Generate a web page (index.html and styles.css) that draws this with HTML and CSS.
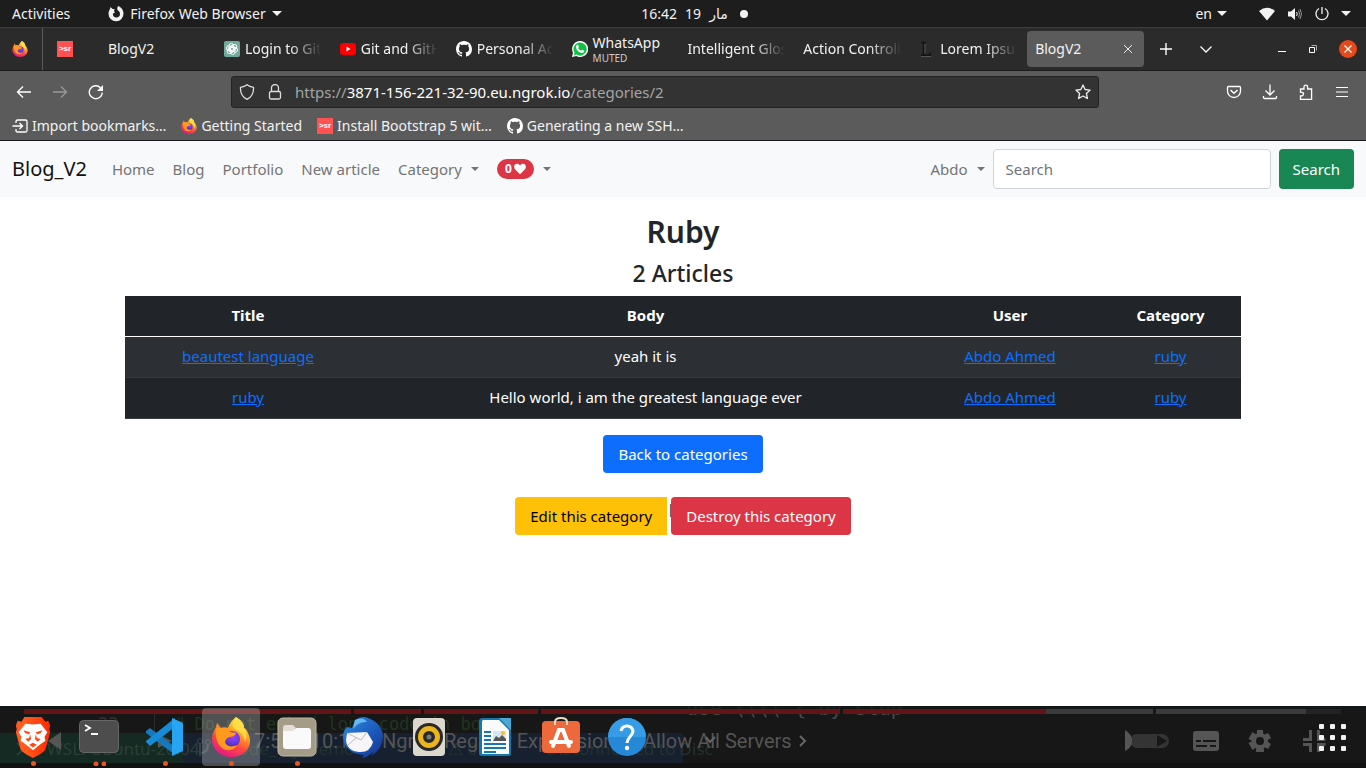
FILE: index.html
```html
<!DOCTYPE html>
<html lang="en">
<head>
<meta charset="utf-8">
<title>BlogV2</title>
<link rel="stylesheet" href="styles.css">
</head>
<body>
<svg class="defs" aria-hidden="true">
  <defs>
    <linearGradient id="flame" x1="0.8" y1="0" x2="0.3" y2="1"><stop offset="0" stop-color="#fff44f"/><stop offset=".35" stop-color="#ffa726"/><stop offset=".65" stop-color="#ff4a3f"/><stop offset="1" stop-color="#e31587"/></linearGradient>
    <radialGradient id="globe" cx=".55" cy=".3" r=".7"><stop offset="0" stop-color="#a43cff"/><stop offset=".6" stop-color="#6a3be0"/><stop offset="1" stop-color="#4a2bb5"/></radialGradient>
    <linearGradient id="brave" x2="1"><stop offset=".3" stop-color="#ff5a1f"/><stop offset="1" stop-color="#ff2a00"/></linearGradient>
    <linearGradient id="bird" x2="1" y2="1"><stop offset="0" stop-color="#2d8de0"/><stop offset=".6" stop-color="#1b56b8"/><stop offset="1" stop-color="#182f8c"/></linearGradient>
    <symbol id="firefox" viewBox="0 0 40 40">
      <path fill="url(#flame)" d="M25 0c6 4 8 7 8 11 3 1 5 7 6 11 1 11-8 18-19 18S1 32 1 22C1 17 3 13 5 10l1-4 4 5c2-1 5-1 7 0 1-4 4-8 8-11z"/>
      <circle cx="21" cy="22" r="8" fill="url(#globe)"/>
      <path fill="#ff9a1f" d="M5 11l5 0c4-1 8 1 9 4l6 1c-1 3-4 4-7 4-3 2-5 4-3 7 2 3 7 3 11 1-3 6-11 7-16 2C5 25 4 17 5 11z"/>
      <path fill="#ffe14a" opacity=".85" d="M25 0c6 4 8 7 8 11 3 4 3 9 1 14-1-7-4-10-9-12-5-3-4-8 0-13z"/>
    </symbol>
    <symbol id="github" viewBox="0 0 16 16"><path fill="#fff" d="M8 0C3.58 0 0 3.58 0 8c0 3.54 2.29 6.53 5.47 7.59.4.07.55-.17.55-.38 0-.19-.01-.82-.01-1.49-2.01.37-2.53-.49-2.69-.94-.09-.23-.48-.94-.82-1.13-.28-.15-.68-.52-.01-.53.63-.01 1.08.58 1.23.82.72 1.21 1.87.87 2.33.66.07-.52.28-.87.51-1.07-1.78-.2-3.64-.89-3.64-3.95 0-.87.31-1.59.82-2.15-.08-.2-.36-1.02.08-2.12 0 0 .67-.21 2.2.82.64-.18 1.32-.27 2-.27s1.36.09 2 .27c1.53-1.04 2.2-.82 2.2-.82.44 1.1.16 1.92.08 2.12.51.56.82 1.27.82 2.15 0 3.07-1.87 3.75-3.65 3.95.29.25.54.73.54 1.48 0 1.07-.01 1.93-.01 2.2 0 .21.15.46.55.38A8.01 8.01 0 0016 8c0-4.42-3.58-8-8-8z"/></symbol>
  </defs>
</svg>

<header class="topbar">
  <div class="topbar-left">
    <span>Activities</span>
    <span class="app-menu">
      <svg width="16" height="16" viewBox="0 0 16 16"><path fill="#f2f2f2" d="M10 0c3 1 5.500 4 5.500 7.500A7.500 7.500 0 11.500 8C.5 5.500 1.500 4 2 3l.5-2 2 2 2 0-.5 2 1 1.500-2 1c-.5 3 2 4 3.500 4 2 0 3.500-1.500 3.500-3.500 0-2-1-3-2-3.500C9 4 9 2 10 0z"/></svg>
      Firefox Web Browser <i class="arrow"></i>
    </span>
  </div>
  <div class="clock"><span>16:42</span><span>19</span><span lang="ar">مار</span><i class="notice"></i></div>
  <div class="topbar-right">
    <span class="lang">en <i class="arrow"></i></span>
    <svg width="16" height="14" viewBox="0 0 16 14"><path fill="#f2f2f2" d="M0 4Q8-2.500 16 4L8 13.500z"/></svg>
    <svg width="16" height="14" viewBox="0 0 16 14"><path fill="#f2f2f2" d="M1 4.500h3L8 1v12L4 9.500H1z"/><path fill="none" stroke="#f2f2f2" d="M9.500 5q1.500 2 0 4"/><path fill="none" stroke="#999" d="M11.500 3.500q2 3.500 0 7M13 2q3 5 0 10"/></svg>
    <svg width="14" height="14" viewBox="0 0 14 14"><path fill="none" stroke="#f2f2f2" stroke-width="1.300" d="M7 0v7M4 1.500a6 6 0 106 0"/></svg>
    <i class="arrow"></i>
  </div>
</header>

<nav class="tabstrip" aria-label="Browser tabs">
  <div class="pinned first"><svg width="16" height="16"><use href="#firefox"/></svg></div>
  <div class="pinned"><span class="sr">&gt;sr</span></div>
  <div class="tabs">
    <a class="tab" href="#">BlogV2</a>
    <a class="tab" href="#"><svg width="16" height="16" viewBox="0 0 16 16"><rect width="16" height="16" rx="2" fill="#74aa9c"/><g fill="none" stroke="#fff" stroke-width=".9"><rect x="5" y="2.500" width="4.500" height="8" rx="2.200"/><rect x="5" y="2.500" width="4.500" height="8" rx="2.200" transform="rotate(60 8 8)"/><rect x="5" y="2.500" width="4.500" height="8" rx="2.200" transform="rotate(120 8 8)"/><rect x="5" y="2.500" width="4.500" height="8" rx="2.200" transform="rotate(180 8 8)"/><rect x="5" y="2.500" width="4.500" height="8" rx="2.200" transform="rotate(240 8 8)"/><rect x="5" y="2.500" width="4.500" height="8" rx="2.200" transform="rotate(300 8 8)"/></g></svg><span class="label">Login to GitHub</span></a>
    <a class="tab" href="#"><svg width="16" height="16" viewBox="0 0 16 16"><rect y="2" width="16" height="12" rx="3" fill="#f00"/><path fill="#fff" d="M6.500 5.500v5l4-2.500z"/></svg><span class="label">Git and GitHub</span></a>
    <a class="tab" href="#"><svg width="16" height="16"><use href="#github"/></svg><span class="label">Personal Access</span></a>
    <a class="tab" href="#"><svg width="16" height="16" viewBox="0 0 16 16"><path fill="#fff" d="M8 0a8 8 0 11-3.700 15L0 16l1-4.300A8 8 0 018 0z"/><path fill="#0fc143" d="M8 1.400a6.600 6.600 0 11-3.400 12.200l-2.700.6.700-2.600A6.600 6.600 0 018 1.400z"/><path fill="#fff" d="M5 3.800l1 0 1 2-.8 1.200q1 2 3 2.800l1-1 2 1c0 2-2 2.500-3 2.200C6.500 11.200 4 8.500 4 6q0-1.500 1-2.200z"/></svg><span class="stack"><span>WhatsApp</span><small>MUTED</small></span></a>
    <a class="tab" href="#"><span class="label">Intelligent Glossary</span></a>
    <a class="tab" href="#"><span class="label">Action Controller</span></a>
    <a class="tab" href="#"><svg width="16" height="16" viewBox="0 0 16 16"><path fill="none" stroke="#111" stroke-width="1.500" d="M2 1.500h5M4.500 1.500v13M2 14.500h9v-3"/><path stroke="#555" d="M2 15.500h10M6 3v9"/></svg><span class="label">Lorem Ipsum</span></a>
    <a class="tab active" href="#">BlogV2<svg width="10" height="10" viewBox="0 0 10 10"><path stroke="#eee" d="M1 1l8 8M9 1L1 9"/></svg></a>
  </div>
  <div class="tab-tools">
    <svg width="14" height="14" viewBox="0 0 14 14"><path stroke="#fff" stroke-width="1.400" d="M7 1v12M1 7h12"/></svg>
    <svg width="14" height="14" viewBox="0 0 14 14"><path fill="none" stroke="#fff" stroke-width="1.300" d="M1.500 4.500L7 10l5.500-5.500"/></svg>
  </div>
  <div class="window-tools">
    <svg width="10" height="10" viewBox="0 0 10 10"><path stroke="#fff" d="M1 7.500h8"/></svg>
    <svg width="10" height="10" viewBox="0 0 10 10"><path fill="none" stroke="#fff" d="M1.500 3.500h5v5h-5z"/><path fill="none" stroke="#aaa" d="M3.500 1.500h5v5"/></svg>
    <span class="close"><svg width="8" height="8" viewBox="0 0 8 8"><path stroke="#fff" stroke-width="1.300" d="M.5.5l7 7M7.500.5l-7 7"/></svg></span>
  </div>
</nav>

<div class="toolbar">
  <div class="nav-tools">
    <svg width="16" height="16" viewBox="0 0 16 16"><path fill="none" stroke="#fff" stroke-width="1.300" d="M15 8H1.500M7 2.500L1.500 8 7 13.500"/></svg>
    <svg width="16" height="16" viewBox="0 0 16 16"><path fill="none" stroke="#999" stroke-width="1.300" d="M1 8h13.500M9 2.500L14.500 8 9 13.500"/></svg>
    <svg width="16" height="16" viewBox="0 0 16 16"><path fill="none" stroke="#fff" stroke-width="1.400" d="M14.300 8.500A6.500 6.500 0 1112.500 3.700"/><path fill="#fff" d="M15 1v6H9z"/></svg>
  </div>
  <div class="urlbar">
    <svg width="16" height="16" viewBox="0 0 16 16"><path fill="none" stroke="#ddd" stroke-width="1.300" d="M8 .8C6 2.500 4 3 1.500 3.300c-.3 5 1.500 9.500 6.500 12 5-2.500 6.800-7 6.500-12C12 3 10 2.500 8 .8z"/></svg>
    <svg width="16" height="16" viewBox="0 0 16 16"><rect x="2.500" y="7.500" width="11" height="7.500" rx="1.500" fill="none" stroke="#ddd" stroke-width="1.300"/><path fill="none" stroke="#ddd" stroke-width="1.300" d="M4.500 7V4a3.500 3.500 0 017 0v3"/></svg>
    <span class="url">https://<b>3871-156-221-32-90.eu.ngrok.io</b>/categories/2</span>
    <svg width="16" height="16" viewBox="0 0 16 16"><path fill="none" stroke="#eee" stroke-width="1.300" stroke-linejoin="round" d="M8 1l2.100 4.500 5 .6-3.700 3.400 1 5L8 12l-4.400 2.500 1-5L.9 6.100l5-.6z"/></svg>
  </div>
  <div class="page-tools">
    <svg width="16" height="16" viewBox="0 0 16 16"><path fill="none" stroke="#fff" stroke-width="1.300" d="M2.500 2.500h11q1 0 1 1V7a6.500 6.500 0 01-13 0V3.500q0-1 1-1z"/><path fill="none" stroke="#fff" stroke-width="1.500" d="M4.500 6L8 9.300 11.500 6"/></svg>
    <svg width="16" height="16" viewBox="0 0 16 16"><path fill="none" stroke="#fff" stroke-width="1.300" d="M8 .5V11M3.500 6.500L8 11l4.500-4.500M1.500 12v1.500q0 1 1 1h11q1 0 1-1V12"/></svg>
    <svg width="16" height="16" viewBox="0 0 16 16"><path fill="none" stroke="#fff" stroke-width="1.300" d="M2.500 15.300v-3.500c4 .8 4-4.300 0-3.500V5h3.500V3a1.800 1.800 0 013.600 0v2h4v10.300z"/></svg>
    <svg width="16" height="16" viewBox="0 0 16 16"><path stroke="#fff" stroke-width="1.200" d="M2 3.500h12M2 8h12M2 12.500h12"/></svg>
  </div>
</div>

<nav class="bookmarks" aria-label="Bookmarks">
  <a href="#"><svg width="16" height="16" viewBox="0 0 16 16"><path fill="none" stroke="#fff" stroke-width="1.300" d="M4 5V3.500q0-1.500 1.500-1.500h8Q15 2 15 3.500v9q0 1.500-1.500 1.500h-8Q4 14 4 12.500V11M.5 8H10M7.500 5l3 3-3 3"/></svg>Import bookmarks…</a>
  <a href="#"><svg width="16" height="16"><use href="#firefox"/></svg>Getting Started</a>
  <a href="#"><span class="sr">&gt;sr</span>Install Bootstrap 5 wit…</a>
  <a href="#"><svg width="16" height="16"><use href="#github"/></svg>Generating a new SSH…</a>
</nav>

<div class="page">
  <nav class="navbar" aria-label="Site">
    <a class="brand" href="#">Blog_V2</a>
    <a href="#">Home</a>
    <a href="#">Blog</a>
    <a href="#">Portfolio</a>
    <a href="#">New article</a>
    <a class="toggle" href="#">Category</a>
    <a class="toggle" href="#"><span class="badge">0<svg width="12" height="12" viewBox="0 0 12 12"><path fill="#fff" d="M6 11.300L1 6.200C-1 3.500.8.800 3 .8c1.300 0 2.300.6 3 1.700C6.700 1.400 7.700.8 9 .8c2.200 0 4 2.700 2 5.400z"/></svg></span></a>
    <a class="toggle user" href="#">Abdo</a>
    <form class="search">
      <input type="search" placeholder="Search" aria-label="Search">
      <button type="button" class="btn success">Search</button>
    </form>
  </nav>
  <main class="container">
    <h1>Ruby</h1>
    <h2>2 Articles</h2>
    <table>
      <colgroup><col class="c-title"><col class="c-body"><col class="c-user"><col class="c-cat"></colgroup>
      <thead><tr><th>Title</th><th>Body</th><th>User</th><th>Category</th></tr></thead>
      <tbody>
        <tr><td><a href="#">beautest language</a></td><td>yeah it is</td><td><a href="#">Abdo Ahmed</a></td><td><a href="#">ruby</a></td></tr>
        <tr><td><a href="#">ruby</a></td><td>Hello world, i am the greatest language ever</td><td><a href="#">Abdo Ahmed</a></td><td><a href="#">ruby</a></td></tr>
      </tbody>
    </table>
    <a class="btn primary" href="#">Back to categories</a>
    <div class="actions"><a class="btn warning" href="#">Edit this category</a><span class="bar">|</span><button type="button" class="btn danger">Destroy this category</button></div>
  </main>
</div>

<footer class="dock">
  <svg class="backdrop" viewBox="0 0 1366 62" preserveAspectRatio="none" aria-hidden="true">
    <rect width="1366" height="62" fill="#171717"/>
    <rect y="27" width="183" height="30" fill="#142a22"/>
    <rect x="183" y="27" width="500" height="30" fill="#17202f"/>
    <rect y="57" width="1366" height="5" fill="#111"/>
    <path stroke="#2c2c2c" d="M154.500 3v24"/>
    <g font-family="'DejaVu Sans Mono', monospace" font-size="17" fill="#1f3520"><text x="174" y="24"># Do not embed long code in bo</text><text x="98" y="24" fill="#333">22</text></g>
    <g font-family="'DejaVu Sans Mono', monospace" font-size="20" fill="#4a4a4a"><text x="686" y="9">use (((( { by stup</text></g>
    <g font-family="'Noto Sans', sans-serif" font-size="17" fill="#2b4038"><path fill="none" stroke="#2b4038" stroke-width="2" d="M17 37l7 6-7 6"/><text x="47" y="49">WSL: Ubuntu-20.04</text></g>
    <path fill="none" stroke="#34434a" stroke-width="2" d="M200 37v13M200 47q8 0 8-8"/><circle cx="200" cy="35" r="2.500" fill="none" stroke="#34434a"/><circle cx="208" cy="36" r="2.500" fill="none" stroke="#34434a"/>
    <g font-family="'Noto Sans', sans-serif" font-size="17" fill="#21332f"><text x="230" y="49">code_my_demo</text><text x="448" y="49">⚠ 0</text><text x="546" y="49">Disconnected to Disc</text></g>
    <rect width="1366" height="3" fill="#141818" opacity=".8"/>
    <path fill="#631414" d="M24 3h327v5H24zM354 3h67v5h-67zM424 3h114v5H424zM541 3h299v5H541zM843 3h203v5H843z"/>
    <path fill="#3b3b3b" d="M1046 3h107v5h-107zM1156 3h150v5h-150z"/><path fill="#232323" d="M1306 3h35v5h-35z"/>
    <path fill="#555" d="M61 26v18l-13-9zM158 28v14l14-7z"/>
    <g font-family="Roboto, sans-serif" font-size="20" fill="#555"><text x="254" y="42">7:53 / 10:17</text><text x="382" y="42">Ngrok</text><text x="444" y="42">Regular Expression</text><text x="643" y="42">Allow All Servers</text></g>
    <path fill="none" stroke="#666" stroke-width="2" d="M800 30l5 5-5 5M706 31l4 5 5-5"/>
    <rect x="1130" y="28" width="39" height="14" rx="7" fill="#343434"/><path fill="#555" d="M1125 24q7 4 7 11t-7 10z"/><path fill="#171717" d="M1157 29v12l10-6z"/>
    <rect x="1193" y="25" width="26" height="20" rx="3" fill="#555"/><path stroke="#171717" stroke-width="2" d="M1196 35h5M1203 35h13M1196 40h11M1210 40h6"/>
    <g transform="translate(1260 35)"><g fill="#555"><circle r="8"/><path d="M-3-11h6l1 22h-8z"/><path d="M-3-11h6l1 22h-8z" transform="rotate(60)"/><path d="M-3-11h6l1 22h-8z" transform="rotate(120)"/></g><circle r="4" fill="#171717"/></g>
    <path fill="none" stroke="#555" stroke-width="3" d="M1303 33.500h7.500V24M1303 38.500h7.500V46M1318.500 24v9.500h7M1318.500 46v-7.500h7"/>
  </svg>
  <div class="apps">
    <button class="app" aria-label="Brave"><svg width="40" height="44" viewBox="0 0 40 44"><path fill="url(#brave)" d="M11 1h18l4 5 3-1 2 5-1 4 1 3-5 18q-1 3-13 9Q8 38 7 35L2 17l1-3-1-4 2-5 4 1z"/><path fill="#fff" d="M12 8l8 1 8-1 7 9-3 5 1 4-6 4-7 6-7-6-6-4 1-4-3-5z"/><path fill="#ff4a10" d="M10 15l7 2-1 2-4-1zM30 15l-7 2 1 2 4-1zM17 19l1 5-3 3-3-3 4-1zM23 19l-1 5 3 3 3-3-4-1zM16 30l4-2 4 2-4 3z"/></svg><i></i></button>
    <button class="app two" aria-label="Terminal"><svg width="40" height="40" viewBox="0 0 40 40"><rect x=".5" y="3.500" width="39" height="32" rx="4" fill="#4d4d4d" stroke="#666"/><path fill="none" stroke="#fff" stroke-width="1.800" d="M6 8l5 3-5 3M12 17h7"/></svg><i></i></button>
    <button class="app" aria-label="Visual Studio Code"><svg width="40" height="40" viewBox="0 0 40 40"><path fill="#1679bd" d="M1 14l4-3 25 19v8L1 16z"/><path fill="#168cd8" d="M1 25l4 4 25-19V1L1 24z"/><path fill="#27a5f2" d="M27 1l11 5v28l-11 5z"/></svg><i></i></button>
    <button class="app current" aria-label="Firefox"><svg width="40" height="40"><use href="#firefox"/></svg><i></i></button>
    <button class="app" aria-label="Files"><svg width="40" height="40" viewBox="0 0 40 40"><rect x="1" y="1" width="38" height="38" rx="5" fill="#a49c87" stroke="#c0b9a8"/><path fill="#e4dfd6" d="M6 11q0-3 3-3h7l3 3h-1v6H6z"/><path fill="#fafafa" d="M6 14h10l3-3h12q3 0 3 3v15q0 3-3 3H9q-3 0-3-3z"/></svg><i></i></button>
    <button class="app off" aria-label="Thunderbird"><svg width="42" height="42" viewBox="0 0 42 42"><path fill="url(#bird)" d="M13 4q7-5 13-2 14 5 15 18 0 13-12 20l3-5q-6 6-12 7l2-3Q6 38 2 26-1 17 5 11l5 1z"/><path fill="#64b9f2" d="M13 4q8-4 12 2-8-1-14 7z"/><path fill="#f7f5f8" d="M5 17l20-1 6 10q-3 11-14 10Q5 35 4 24z"/><path fill="none" stroke="#bbb" d="M5 17l14 7 6-8M6 29l8-7"/></svg><i></i></button>
    <button class="app off" aria-label="Rhythmbox"><svg width="40" height="40" viewBox="0 0 40 40"><rect x="4" y="1" width="32" height="38" rx="4" fill="#ddd8ce"/><circle cx="20" cy="20" r="14" fill="#292929"/><circle cx="20" cy="20" r="8.500" fill="none" stroke="#edb51c" stroke-width="5"/><circle cx="20" cy="20" r="2.500" fill="#777"/></svg><i></i></button>
    <button class="app off" aria-label="Writer"><svg width="40" height="40" viewBox="0 0 40 40"><path fill="#1577ad" d="M8 1h28v36q0 2-2 2H7q-3 0-3-3V4q0-3 4-3z"/><path fill="#fafafa" d="M8 3h16l10 10v24H7V4z"/><path fill="#4ba8d5" d="M24 1h12v12z"/><path stroke="#1577ad" stroke-width="2" d="M9 15h7M9 19h7M9 23h7M9 27h22M9 31h22M9 35h12"/><path fill="#d7e7ef" d="M18 14h13v10H18z"/><path fill="#555" d="M18 24l3-5 3 2 3-3 4 4v2z"/><circle cx="28" cy="16" r="2" fill="#fb3"/></svg><i></i></button>
    <button class="app off" aria-label="Software"><svg width="40" height="40" viewBox="0 0 40 40"><rect x="1" y="4" width="38" height="32" rx="4" fill="#ed683b"/><path fill="none" stroke="#eadcc3" stroke-width="2" d="M14 8V5q0-4 6-4t6 4v3"/><path fill="none" stroke="#fff" stroke-width="4" stroke-linecap="round" d="M12 29l6-16h4l6 16M10 25h20"/></svg><i></i></button>
    <button class="app off" aria-label="Help"><svg width="40" height="40" viewBox="0 0 40 40"><circle cx="20" cy="20" r="19" fill="#2589d8"/><path fill="#359ce5" d="M1 20a19 19 0 0138 0z"/><path fill="none" stroke="#fff" stroke-width="3" d="M14 14q1-5 6-5t6 5c0 5-6 6-6 12"/><circle cx="20" cy="31" r="2.200" fill="#fff"/></svg><i></i></button>
  </div>
  <button class="grid" aria-label="Show applications"><i></i><i></i><i></i><i></i><i></i><i></i><i></i><i></i><i></i></button>
</footer>
</body>
</html>
```
FILE: styles.css
```css
* { box-sizing: border-box; }
body {
  margin: 0;
  min-height: 100vh;
  display: flex;
  flex-direction: column;
  font: 14px/20px "Noto Sans", "DejaVu Sans", sans-serif;
  color: #f2f2f2;
  background: #fff;
}
a { color: inherit; text-decoration: none; }
svg { flex: none; display: block; }
button { font: inherit; border: 0; padding: 0; background: none; cursor: pointer; }
.defs { position: absolute; width: 0; height: 0; }

/* Desktop panel */
.topbar {
  display: grid;
  grid-template-columns: 1fr auto 1fr;
  align-items: center;
  height: 27px;
  padding: 0 15px 0 12px;
  background: #1d1d1d;
}
.topbar-left, .topbar-right, .app-menu, .clock, .lang { display: flex; align-items: center; }
.topbar-left { gap: 38px; }
.app-menu { gap: 6px; }
.arrow {
  border: 5px solid transparent;
  border-top-color: #f2f2f2;
  border-bottom: 0;
}
.clock { gap: 8px; padding-left: 26px; }
.notice { width: 8px; height: 8px; margin-left: 4px; border-radius: 50%; background: #f2f2f2; }
.topbar-right { justify-content: flex-end; gap: 12px; }
.lang { gap: 5px; margin-right: 20px; }

/* Browser tabs */
.tabstrip {
  display: flex;
  align-items: stretch;
  height: 44px;
  background: #2b2b2b;
  border-top: 1px solid #3d3d3d;
  border-bottom: 1px solid #1c1c1c;
}
.pinned { display: flex; align-items: center; padding: 0 26px 0 14px; }
.pinned.first { padding: 0 14px 0 12px; border-right: 1px solid #5b5b5b; }
.sr {
  width: 16px;
  height: 16px;
  flex: none;
  background: #ff5252;
  font: bold 8px/15px "Liberation Sans", sans-serif;
  text-align: center;
  color: #fff;
}
.tabs { display: flex; flex: 1; min-width: 0; }
.tab {
  display: flex;
  flex: 1 1 0;
  align-items: center;
  gap: 5px;
  min-width: 0;
  margin: 3px 1px;
  padding: 0 8px;
  border-radius: 4px;
}
.label {
  flex: 1;
  min-width: 0;
  overflow: hidden;
  white-space: nowrap;
  mask-image: linear-gradient(to left, transparent, #000 32px);
}
.stack { display: flex; flex-direction: column; line-height: 17px; }
.stack small { font-size: 10px; line-height: 14px; color: #ccc; }
.tab.active { justify-content: space-between; padding-right: 11px; background: #5b5b5b; }
.tab-tools { display: flex; align-items: center; gap: 26px; padding: 0 64px 0 14px; }
.window-tools { display: flex; align-items: center; gap: 21px; padding-right: 9px; }
.close {
  display: grid;
  place-items: center;
  width: 18px;
  height: 18px;
  border-radius: 50%;
  background: #e5491c;
}

/* Address row */
.toolbar {
  display: flex;
  align-items: center;
  height: 41px;
  padding: 0 16px;
  background: #5b5b5b;
}
.nav-tools, .page-tools { display: flex; gap: 20px; }
.nav-tools { flex: none; width: 215px; }
.page-tools { margin-left: 127px; }
.urlbar {
  display: flex;
  flex: 1;
  align-items: center;
  gap: 12px;
  height: 32px;
  padding: 0 7px;
  border: 1px solid #222;
  border-radius: 3px;
  background: #333;
}
.url { flex: 1; font-size: 15px; color: #a5a5a5; }
.url b { font-weight: 400; color: #fff; }
.bookmarks {
  display: flex;
  align-items: center;
  gap: 15px;
  height: 29px;
  padding: 0 12px;
  background: #5b5b5b;
  border-bottom: 1px solid #19191d;
}
.bookmarks a { display: flex; align-items: center; gap: 4px; }

/* Site */
.page { flex: 1; font-size: 15px; line-height: 24px; color: #212529; }
.navbar {
  display: flex;
  align-items: center;
  min-height: 56px;
  padding: 8px 12px;
  background: #f8f9fa;
  color: #747576;
}
.navbar > a { padding: 0 9px; }
.navbar .brand { padding: 0 16px 0 0; font-size: 20px; color: #111; }
.navbar .user { margin-left: auto; padding-right: 8px; }
.toggle { display: flex; align-items: center; gap: 9px; }
.toggle::after {
  content: "";
  border: 4px solid transparent;
  border-top-color: currentColor;
  border-bottom: 0;
}
.badge {
  display: flex;
  align-items: center;
  gap: 2px;
  height: 20px;
  padding: 0 8px;
  border-radius: 10px;
  background: #dc3545;
  color: #fff;
  font-size: 12px;
  font-weight: 700;
}
.search { display: flex; gap: 8px; }
.search input {
  width: 278px;
  height: 40px;
  padding: 0 12px;
  border: 1px solid #ced4da;
  border-radius: 4px;
  background: #fff;
  font: inherit;
}
.search input::placeholder { color: #6c757d; }
.btn {
  display: inline-block;
  padding: 7px 15px;
  border-radius: 4px;
  line-height: 24px;
  color: #fff;
}
.success { padding: 7px 14px; background: #198754; }
.primary { background: #0d6efd; }
.warning { background: #ffc107; color: #000; border-radius: 4px 0 0 4px; }
.danger { background: #dc3545; }
.container { max-width: 1140px; margin: 0 auto; padding: 16px 12px; text-align: center; }
h1, h2 { margin: 0 0 8px; }
h1 { font-size: 30px; line-height: 38px; font-weight: 600; }
h2 { font-size: 23px; line-height: 29px; font-weight: 500; }
table { width: 100%; margin-bottom: 16px; table-layout: fixed; border-collapse: separate; border-spacing: 0; background: #212529; color: #fff; }
th, td { height: 41px; padding: 7px 8px 9px; border-bottom: 1px solid #373b3e; }
th { border-bottom-color: #fff; font-weight: 700; }
tbody tr:first-child td { background: #2c3034; }
td a { color: #0d6efd; text-decoration: underline; }
.c-title { width: 246px; }
.c-body { width: auto; }
.c-user { width: 180px; }
.c-cat { width: 141px; }
.actions { display: flex; justify-content: center; margin-top: 24px; }
.bar { width: 4px; overflow: hidden; font-size: 12px; line-height: 26px; }

/* Dock */
.dock {
  position: relative;
  display: flex;
  align-items: center;
  justify-content: space-between;
  height: 62px;
  padding: 0 20px 0 4px;
}
.backdrop { position: absolute; inset: 0; width: 100%; height: 100%; }
.apps { position: relative; display: flex; gap: 8px; }
.app {
  display: flex;
  flex-direction: column;
  align-items: center;
  justify-content: space-between;
  width: 58px;
  height: 58px;
  border-radius: 4px;
}
.app svg { height: 42px; margin-top: 8px; }
.app i { width: 5px; height: 5px; border-radius: 50%; background: #e95420; }
.app.two i { width: 13px; border-radius: 0; background: radial-gradient(circle at 3px 3px, #e95420 2px, transparent 3px) 0 0 / 8px 5px; }
.app.off i { visibility: hidden; }
.app.current { background: rgba(255, 255, 255, .25); }
.grid { position: relative; display: grid; grid-template-columns: repeat(3, 5px); gap: 6px; }
.grid i { width: 5px; height: 5px; border-radius: 1px; background: #f2f2f2; }
```
